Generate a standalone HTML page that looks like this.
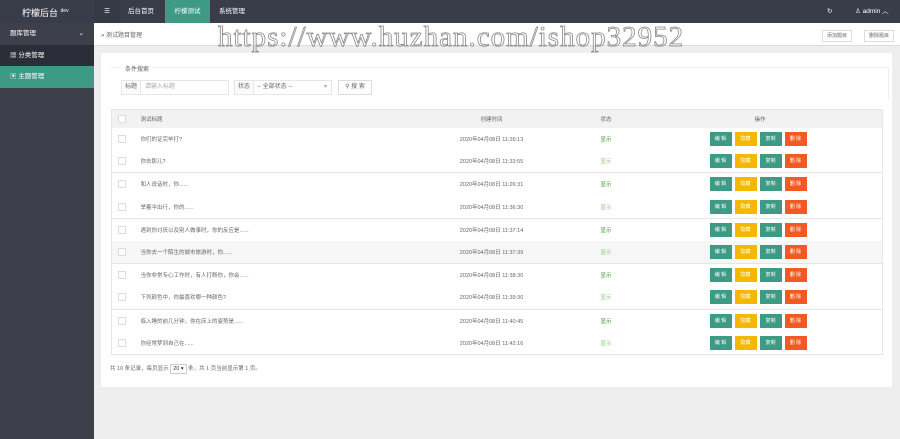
<!DOCTYPE html>
<html><head><meta charset="utf-8"><style>
*{margin:0;padding:0;box-sizing:border-box}
body{width:900px;height:439px;overflow:hidden;background:#eee;font-family:"Liberation Sans","Noto Sans CJK SC",sans-serif;font-size:6px;color:#666;position:relative}
.top{position:absolute;left:0;top:0;width:900px;height:23px;background:#393d49;color:#fff}
.top span{position:absolute;top:0;line-height:23px;font-size:6.5px}
.side{position:absolute;left:0;top:23px;width:94px;height:416px;background:#3d3f4b;color:#fff}
.side div{height:21.5px;line-height:21.5px;padding-left:10px;font-size:6.5px}
.bc{position:absolute;left:94px;top:23px;width:806px;height:23px;background:#fff;border-bottom:1px solid #ddd}
.btn2{position:absolute;top:7px;height:12px;line-height:11px;border:1px solid #ddd;padding:0 4px;font-size:5px;color:#666}
.card{position:absolute;left:101px;top:53px;width:791px;height:334px;background:#fff}
.fs{position:absolute;left:10px;top:14px;width:778px;height:32px;border-top:1px solid #eee;border-right:1px solid #eee}
table{position:absolute;left:10px;top:56px;width:772px;border-collapse:collapse;border:1px solid #e6e6e6;table-layout:fixed}
td,th{height:22.7px;font-weight:normal;font-size:5.5px;text-align:left;color:#666;white-space:nowrap;overflow:hidden}
th{height:18px;background:#f2f2f2}
tr.b td{border-bottom:1px solid #e6e6e6}
tr.g td{background:#f6f6f6}
.c{text-align:center}
.s{padding-left:38px}
.a{padding-left:47px}
.cb{display:inline-block;width:8px;height:8px;border:1px solid #ddd;background:#fff;margin-left:6px;vertical-align:middle}
.b1,.b2,.b3,.b4{display:inline-block;width:22px;height:14px;line-height:14px;color:#fff;text-align:center;font-size:5px;margin-right:3px;vertical-align:middle}
.b1,.b3{background:#3d9a85}.b2{background:#f5b800}.b4{background:#f35a23}
.wm{position:absolute;left:218px;top:21px;font-family:"Liberation Serif",serif;font-size:29px;color:transparent;-webkit-text-stroke:0.8px #888;letter-spacing:1px;white-space:nowrap}
</style></head><body>
<div class="top">
<span style="left:22px;font-size:9px">柠檬后台 <sup style="font-size:5px">dev</sup></span>
<span style="left:94px;width:26px;background:#363a45;text-align:center">☰</span>
<span style="left:128px">后台首页</span>
<span style="left:165px;width:45px;background:#3d9a85;text-align:center">柠檬测试</span>
<span style="left:219px">系统管理</span>
<span style="left:827px">↻</span>
<span style="left:855px">♙ admin ︿</span>
</div>
<div class="side">
<div>题库管理<span style="float:right;margin-right:10px">⌄</span></div>
<div style="background:#2b2e38">▦ 分类管理</div>
<div style="background:#3d9a85">▣ 主题管理</div>
</div>
<div class="bc"><span style="position:absolute;left:7px;top:7px;font-size:6px">» 测试题目管理</span>
<span class="btn2" style="left:728px">添加题目</span><span class="btn2" style="left:770px">删除题目</span></div>
<div class="wm">https://www.huzhan.com/ishop32952</div>
<div class="card">
<div class="fs"><span style="position:absolute;left:10px;top:-4px;background:#fff;padding:0 4px;font-size:6px">条件搜索</span>
<div style="position:absolute;left:10px;top:12px;width:108px;height:15px;border:1px solid #e6e6e6"><span style="display:inline-block;width:19px;height:13px;background:#fbfbfb;border-right:1px solid #e6e6e6;line-height:13px;text-align:center">标题</span><span style="color:#aaa;margin-left:4px">请输入标题</span></div>
<div style="position:absolute;left:123px;top:12px;width:98px;height:15px;border:1px solid #e6e6e6"><span style="display:inline-block;width:19px;height:13px;background:#fbfbfb;border-right:1px solid #e6e6e6;line-height:13px;text-align:center">状态</span><span style="margin-left:3px">-- 全部状态 --</span><span style="float:right;margin-right:4px;line-height:13px;color:#aaa">▾</span></div>
<div style="position:absolute;left:227px;top:12px;width:34px;height:15px;border:1px solid #ddd;line-height:13px;text-align:center">⚲ 搜 索</div>
</div>
<table>
<colgroup><col style="width:29px"><col style="width:280px"><col style="width:142px"><col style="width:100px"><col></colgroup>
<tr class="b"><th><span class="cb"></span></th><th>测试标题</th><th class="c">创建时间</th><th class="s">状态</th><th class="a" style="padding-left:92px">操作</th></tr>
<tr><td><span class="cb"></span></td><td>你们的证完毕打?</td><td class="c">2020年04月08日 11:26:13</td><td class="s" style="color:#3a9b2a">显示</td><td class="a"><span class="b1">编 辑</span><span class="b2">隐藏</span><span class="b3">复制</span><span class="b4">删 除</span></td></tr>
<tr class="b"><td><span class="cb"></span></td><td>你去那儿?</td><td class="c">2020年04月08日 11:33:55</td><td class="s" style="color:#8bc77d">显示</td><td class="a"><span class="b1">编 辑</span><span class="b2">隐藏</span><span class="b3">复制</span><span class="b4">删 除</span></td></tr>
<tr><td><span class="cb"></span></td><td>和人说话时，你......</td><td class="c">2020年04月08日 11:26:31</td><td class="s" style="color:#3a9b2a">显示</td><td class="a"><span class="b1">编 辑</span><span class="b2">隐藏</span><span class="b3">复制</span><span class="b4">删 除</span></td></tr>
<tr class="b"><td><span class="cb"></span></td><td>举着伞出行，你的......</td><td class="c">2020年04月08日 11:36:30</td><td class="s" style="color:#8bc77d">显示</td><td class="a"><span class="b1">编 辑</span><span class="b2">隐藏</span><span class="b3">复制</span><span class="b4">删 除</span></td></tr>
<tr><td><span class="cb"></span></td><td>遇到你讨厌以及别人做事时，你的反应是......</td><td class="c">2020年04月08日 11:37:14</td><td class="s" style="color:#3a9b2a">显示</td><td class="a"><span class="b1">编 辑</span><span class="b2">隐藏</span><span class="b3">复制</span><span class="b4">删 除</span></td></tr>
<tr class="b g"><td><span class="cb"></span></td><td>当你去一个陌生的城市旅游时，你......</td><td class="c">2020年04月08日 11:37:39</td><td class="s" style="color:#8bc77d">显示</td><td class="a"><span class="b1">编 辑</span><span class="b2">隐藏</span><span class="b3">复制</span><span class="b4">删 除</span></td></tr>
<tr><td><span class="cb"></span></td><td>当你非常专心工作时，有人打断你，你会......</td><td class="c">2020年04月08日 11:38:30</td><td class="s" style="color:#3a9b2a">显示</td><td class="a"><span class="b1">编 辑</span><span class="b2">隐藏</span><span class="b3">复制</span><span class="b4">删 除</span></td></tr>
<tr class="b"><td><span class="cb"></span></td><td>下列颜色中，你最喜欢哪一种颜色?</td><td class="c">2020年04月08日 11:39:30</td><td class="s" style="color:#8bc77d">显示</td><td class="a"><span class="b1">编 辑</span><span class="b2">隐藏</span><span class="b3">复制</span><span class="b4">删 除</span></td></tr>
<tr><td><span class="cb"></span></td><td>临入睡的前几分钟，你在床上的姿势是......</td><td class="c">2020年04月08日 11:40:45</td><td class="s" style="color:#3a9b2a">显示</td><td class="a"><span class="b1">编 辑</span><span class="b2">隐藏</span><span class="b3">复制</span><span class="b4">删 除</span></td></tr>
<tr class="b"><td><span class="cb"></span></td><td>你经常梦到自己在......</td><td class="c">2020年04月08日 11:42:16</td><td class="s" style="color:#8bc77d">显示</td><td class="a"><span class="b1">编 辑</span><span class="b2">隐藏</span><span class="b3">复制</span><span class="b4">删 除</span></td></tr>
</table>
<div style="position:absolute;left:9px;top:311px;font-size:5.5px">共 10 条记录，每页显示 <span style="display:inline-block;border:1px solid #ccc;padding:1px 2px;color:#333">20 ▾</span> 条，共 1 页当前显示第 1 页。</div>
</div>
</body></html>
